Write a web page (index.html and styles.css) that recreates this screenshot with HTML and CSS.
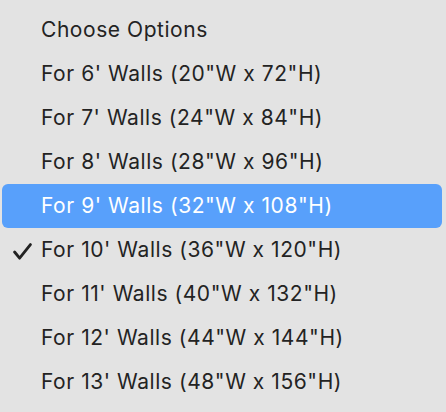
FILE: index.html
```html
<!DOCTYPE html>
<html>
<head>
<meta charset="utf-8">
<link rel="stylesheet" href="styles.css">
</head>
<body>
<ul class="menu">
  <li class="item"><span class="check"></span><span class="label">Choose Options</span></li>
  <li class="item"><span class="check"></span><span class="label">For 6' Walls (20"W x 72"H)</span></li>
  <li class="item"><span class="check"></span><span class="label">For 7' Walls (24"W x 84"H)</span></li>
  <li class="item"><span class="check"></span><span class="label">For 8' Walls (28"W x 96"H)</span></li>
  <li class="item active"><span class="check"></span><span class="label">For 9' Walls (32"W x 108"H)</span></li>
  <li class="item"><span class="check"><svg width="19" height="17" viewBox="0 0 19 17"><path d="M1.6 9 L6.6 15.2 L17.4 1.6" fill="none" stroke="#222" stroke-width="2.8" stroke-linecap="round" stroke-linejoin="round"/></svg></span><span class="label">For 10' Walls (36"W x 120"H)</span></li>
  <li class="item"><span class="check"></span><span class="label">For 11' Walls (40"W x 132"H)</span></li>
  <li class="item"><span class="check"></span><span class="label">For 12' Walls (44"W x 144"H)</span></li>
  <li class="item"><span class="check"></span><span class="label">For 13' Walls (48"W x 156"H)</span></li>
</ul>
</body>
</html>
```
FILE: styles.css
```css
html, body {
  margin: 0;
  padding: 0;
  background: #e3e3e3;
}
.menu {
  list-style: none;
  margin: 0;
  padding: 8px 4px 8px 2px;
  display: flex;
  flex-direction: column;
  font-family: Inter, "Noto Sans", sans-serif;
  font-size: 21px;
  color: #232323;
}
.item {
  height: 44px;
  display: flex;
  align-items: center;
  border-radius: 6px;
}
.item.active {
  background: #58a0fb;
  color: #ffffff;
}
.check {
  width: 39px;
  display: flex;
  justify-content: flex-end;
}
.check svg {
  margin-right: 9px;
  margin-top: 3px;
}
.label {
  white-space: pre;
  letter-spacing: 0.55px;
  margin-top: -2px;
}
```
